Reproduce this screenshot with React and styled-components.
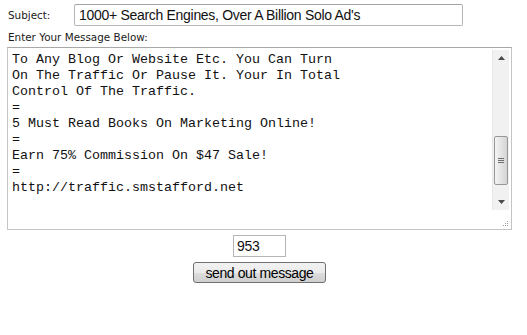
import React from "react";
import styled, { createGlobalStyle } from "styled-components";

const lines = [
  "To Any Blog Or Website Etc. You Can Turn",
  "On The Traffic Or Pause It. Your In Total",
  "Control Of The Traffic.",
  "=",
  "5 Must Read Books On Marketing Online!",
  "=",
  "Earn 75% Commission On $47 Sale!",
  "=",
  "http://traffic.smstafford.net",
];

const App = () => {
  return (
    <Page>
      <GlobalStyle />
      <SubjectRow>
        <Label>Subject:</Label>
        <SubjectInput>1000+ Search Engines, Over A Billion Solo Ad's</SubjectInput>
      </SubjectRow>
      <MessageLabel>Enter Your Message Below:</MessageLabel>
      <MessageBox>
        <MessageText>
          {lines.map((l, i) => (
            <Line key={i}>{l}</Line>
          ))}
        </MessageText>
        <ScrollColumn>
          <Scrollbar>
            <ArrowButton>
              <svg width="7" height="4" viewBox="0 0 7 4">
                <path d="M0 4 L3.5 0 L7 4 Z" fill="#4a4a4a" />
              </svg>
            </ArrowButton>
            <Track>
              <Thumb>
                <Grip />
                <Grip />
                <Grip />
              </Thumb>
            </Track>
            <ArrowButton>
              <svg width="7" height="4" viewBox="0 0 7 4">
                <path d="M0 0 L3.5 4 L7 0 Z" fill="#4a4a4a" />
              </svg>
            </ArrowButton>
          </Scrollbar>
          <Resizer>
            <svg width="7" height="7" viewBox="0 0 7 7">
              <rect x="5" y="1" width="1" height="1" fill="#9a9a9a" />
              <rect x="3" y="3" width="1" height="1" fill="#9a9a9a" />
              <rect x="5" y="3" width="1" height="1" fill="#9a9a9a" />
              <rect x="1" y="5" width="1" height="1" fill="#9a9a9a" />
              <rect x="3" y="5" width="1" height="1" fill="#9a9a9a" />
              <rect x="5" y="5" width="1" height="1" fill="#9a9a9a" />
            </svg>
          </Resizer>
        </ScrollColumn>
      </MessageBox>
      <Footer>
        <CountBox>953</CountBox>
        <SendButton>send out message</SendButton>
      </Footer>
    </Page>
  );
};

const GlobalStyle = createGlobalStyle`
  body {
    margin: 0;
    background: #ffffff;
  }
`;

const Page = styled.div`
  width: 527px;
  height: 335px;
  padding: 4px 0 0 7px;
  box-sizing: border-box;
`;

const SubjectRow = styled.div`
  display: flex;
  align-items: center;
  height: 22px;
`;

const Label = styled.div`
  width: 66px;
  padding-left: 1px;
  font-family: "DejaVu Sans", Verdana, sans-serif;
  font-size: 10.4px;
  color: #1a1a1a;
`;

const SubjectInput = styled.div`
  width: 389px;
  height: 22px;
  box-sizing: border-box;
  border: 1px solid #b5b5b5;
  border-top-color: #a3a3a3;
  border-radius: 2px;
  padding: 0 4px;
  font-family: "Liberation Sans", Arial, sans-serif;
  font-size: 14px;
  letter-spacing: -0.3px;
  line-height: 20px;
  color: #111;
  white-space: nowrap;
  overflow: hidden;
`;

const MessageLabel = styled.div`
  margin-top: 5px;
  padding-left: 1px;
  height: 16px;
  font-family: "DejaVu Sans", Verdana, sans-serif;
  font-size: 10.4px;
  line-height: 12px;
  color: #1a1a1a;
`;

const MessageBox = styled.div`
  display: flex;
  width: 505px;
  height: 183px;
  box-sizing: border-box;
  border: 1px solid #c4c4c4;
  border-top-color: #a8a8a8;
`;

const MessageText = styled.div`
  flex: 1;
  padding: 4px 0 0 4px;
  font-family: "Liberation Mono", "Courier New", monospace;
  font-size: 13.33px;
  line-height: 16px;
  color: #111;
  overflow: hidden;
`;

const Line = styled.div`
  white-space: pre;
  height: 16px;
`;

const ScrollColumn = styled.div`
  display: flex;
  flex-direction: column;
  width: 19px;
  padding: 2px 2px 0 0;
  box-sizing: border-box;
`;

const Scrollbar = styled.div`
  display: flex;
  flex-direction: column;
  width: 17px;
  height: 160px;
  background: #f1f1f1;
  border-left: 1px solid #e8e8e8;
  box-sizing: border-box;
`;

const ArrowButton = styled.div`
  height: 16px;
  display: flex;
  align-items: center;
  justify-content: center;
`;

const Track = styled.div`
  flex: 1;
  display: flex;
  flex-direction: column;
  justify-content: flex-end;
  padding-bottom: 9px;
`;

const Thumb = styled.div`
  height: 49px;
  margin: 0 1px;
  box-sizing: border-box;
  border: 1px solid #979797;
  border-radius: 2px;
  background: linear-gradient(to right, #f4f4f4, #e4e4e4 50%, #d4d4d4);
  display: flex;
  flex-direction: column;
  align-items: center;
  justify-content: center;
  gap: 1px;
`;

const Grip = styled.div`
  width: 6px;
  height: 1px;
  background: #6e6e6e;
`;

const Resizer = styled.div`
  flex: 1;
  display: flex;
  align-items: flex-end;
  justify-content: flex-end;
  padding: 0 0 2px 0;
`;

const Footer = styled.div`
  display: flex;
  flex-direction: column;
  align-items: center;
  width: 505px;
  margin-top: 5px;
  gap: 5px;
`;

const CountBox = styled.div`
  width: 53px;
  height: 22px;
  box-sizing: border-box;
  border: 1px solid #b5b5b5;
  padding: 0 3px;
  font-family: "Liberation Sans", Arial, sans-serif;
  font-size: 14px;
  letter-spacing: -0.3px;
  line-height: 20px;
  color: #111;
`;

const SendButton = styled.button`
  width: 133px;
  height: 21px;
  box-sizing: border-box;
  border: 1px solid #707070;
  border-radius: 3px;
  background: linear-gradient(to bottom, #f2f2f2 0%, #ebebeb 50%, #dddddd 51%, #cfcfcf 100%);
  font-family: "Liberation Sans", Arial, sans-serif;
  font-size: 14px;
  letter-spacing: -0.4px;
  color: #000;
  padding: 0;
  line-height: 18px;
`;

export default App;
